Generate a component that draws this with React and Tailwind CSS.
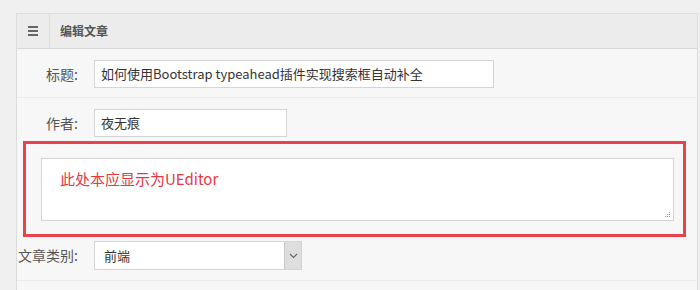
import React from "react";

const font = { fontFamily: '"Noto Sans CJK SC", "Open Sans", sans-serif' };

function Row({ label, children, className = "" }) {
  return (
    <div className={"flex items-center " + className}>
      <div className="w-[61px] text-right text-[14px] text-[#555] whitespace-nowrap">{label}</div>
      <div className="ml-[16px]">{children}</div>
    </div>
  );
}

export default function App() {
  return (
    <div className="w-[700px] h-[290px] bg-[#f0f0f0] pl-[16px] pt-[13px] overflow-hidden" style={font}>
      <div className="w-[682px] border border-[#dcdcdc] bg-[#f7f7f7] h-[300px]">
        <div className="flex h-[35px] bg-[#ececec] border-b border-[#d8d8d8]">
          <div className="w-[33px] border-r border-[#dcdcdc] flex flex-col items-center justify-center gap-[2px]">
            <span className="block w-[10px] h-[2px] bg-[#666]" />
            <span className="block w-[10px] h-[2px] bg-[#666]" />
            <span className="block w-[10px] h-[2px] bg-[#666]" />
          </div>
          <div className="pl-[10px] flex items-center text-[12px] font-bold text-[#555]">编辑文章</div>
        </div>

        <Row label="标题:" className="pt-[11px] pb-[9px] border-b border-[#ececec]">
          <div className="w-[400px] h-[28px] bg-white border border-[#d4d4d4] px-[6px] flex items-center text-[13px] text-[#333] whitespace-nowrap">
            如何使用Bootstrap typeahead插件实现搜索框自动补全
          </div>
        </Row>

        <Row label="作者:" className="pt-[11px] pb-[4px]">
          <div className="w-[193px] h-[28px] bg-white border border-[#d4d4d4] px-[6px] flex items-center text-[13px] text-[#333]">
            夜无痕
          </div>
        </Row>

        <div className="ml-[6px] mr-[11px] border-[3px] border-[#e8424a] pl-[15px] pr-[9px] pt-[14px] pb-[13px]">
          <div className="relative h-[63px] bg-white border border-[#d4d4d4] pl-[18px] pt-[10px] text-[15px] text-[#e5393f] leading-[20px]">
            此处本应显示为UEditor
            <div className="absolute right-[3px] bottom-[3px] grid grid-cols-3 gap-[1px]">
              <span className="w-[1px] h-[1px]" />
              <span className="w-[1px] h-[1px]" />
              <span className="w-[1px] h-[1px] bg-[#999]" />
              <span className="w-[1px] h-[1px]" />
              <span className="w-[1px] h-[1px] bg-[#999]" />
              <span className="w-[1px] h-[1px] bg-[#999]" />
              <span className="w-[1px] h-[1px] bg-[#999]" />
              <span className="w-[1px] h-[1px] bg-[#999]" />
              <span className="w-[1px] h-[1px] bg-[#999]" />
            </div>
          </div>
        </div>

        <Row label="文章类别:" className="pt-[4px] pb-[10px] border-b border-[#ececec]">
          <div className="w-[208px] h-[29px] bg-white border border-[#d4d4d4] flex text-[13px] text-[#333]">
            <div className="flex-1 pl-[9px] flex items-center">前端</div>
            <div className="w-[17px] bg-[#dedede] border-l border-[#c8c8c8] flex items-center justify-center">
              <svg width="9" height="6" viewBox="0 0 9 6">
                <path d="M1 1 L4.5 4.5 L8 1" fill="none" stroke="#666" strokeWidth="1.2" />
              </svg>
            </div>
          </div>
        </Row>
      </div>
    </div>
  );
}
